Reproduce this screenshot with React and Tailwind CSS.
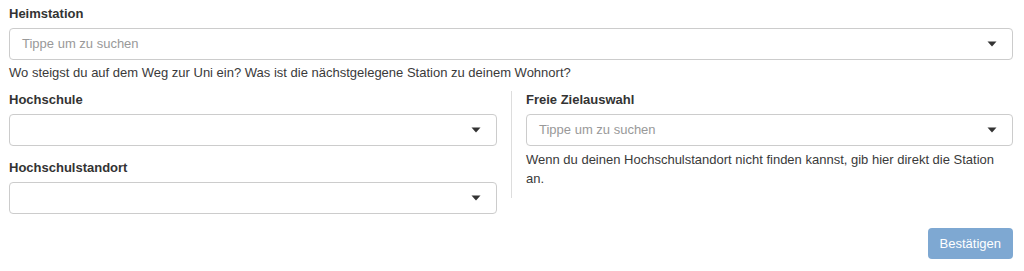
import React from 'react';

const FONT = { fontFamily: '"Liberation Sans", Arial, sans-serif' };

function Caret() {
  return (
    <svg width="10" height="6" viewBox="0 0 10 6" className="shrink-0">
      <path d="M0.5 0.5 L9.5 0.5 L5 5.5 Z" fill="#333" />
    </svg>
  );
}

function Select({ placeholder }) {
  return (
    <div className="flex items-center justify-between h-[32px] border border-[#ccc] rounded-[4px] bg-white pl-[12px] pr-[15px]">
      <span className="text-[13px] text-[#999]">{placeholder}</span>
      <Caret />
    </div>
  );
}

function Label({ children }) {
  return <div className="text-[13px] leading-[18px] font-bold text-[#333] mb-[5px]">{children}</div>;
}

export default function App() {
  return (
    <div style={FONT} className="w-[1024px] h-[271px] bg-white pl-[9px] pr-[11px] pt-[5px] text-[#333]">
      <Label>Heimstation</Label>
      <Select placeholder="Tippe um zu suchen" />
      <p className="text-[13px] leading-[18px] text-[#3a3a3a] mt-[4px]">
        Wo steigst du auf dem Weg zur Uni ein? Was ist die nächstgelegene Station zu deinem Wohnort?
      </p>

      <div className="flex mt-[9px]">
        <div className="w-[488px] shrink-0">
          <Label>Hochschule</Label>
          <Select placeholder="" />
          <div className="mt-[13px]">
            <Label>Hochschulstandort</Label>
            <Select placeholder="" />
          </div>
        </div>
        <div className="ml-[14px] border-l border-[#ddd] pl-[14px] flex-1 self-start pb-[10px]">
          <Label>Freie Zielauswahl</Label>
          <Select placeholder="Tippe um zu suchen" />
          <p className="text-[13px] leading-[19px] text-[#3a3a3a] mt-[4px]">
            Wenn du deinen Hochschulstandort nicht finden kannst, gib hier direkt die Station an.
          </p>
        </div>
      </div>

      <div className="flex justify-end mt-[14px]">
        <button className="h-[31px] px-[12px] rounded-[4px] bg-[#7ea8d2] text-white text-[13px]">
          Bestätigen
        </button>
      </div>
    </div>
  );
}
